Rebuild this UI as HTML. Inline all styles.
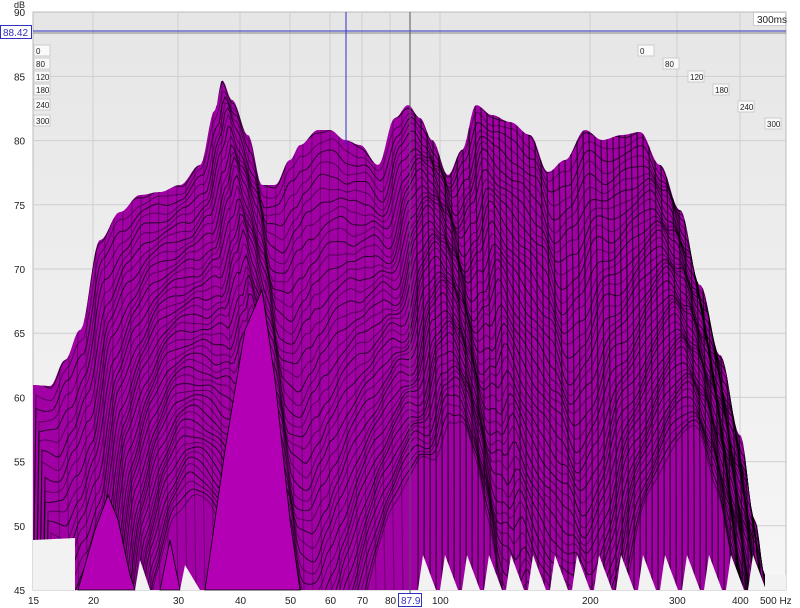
<!DOCTYPE html>
<html><head><style>
html,body{margin:0;background:#fff;width:800px;height:608px;overflow:hidden;font-family:"Liberation Sans",sans-serif}
svg{display:block}
</style></head><body>
<svg id="s" width="800" height="608" viewBox="0 0 800 608" xmlns="http://www.w3.org/2000/svg" font-family="Liberation Sans, sans-serif" font-size="10">
<defs>
<linearGradient id="bg" x1="0" y1="0" x2="0" y2="1"><stop offset="0" stop-color="#e6e6e6"/><stop offset="1" stop-color="#f6f6f6"/></linearGradient>
<clipPath id="env"><polygon id="envp" points=""/></clipPath>
</defs>
<rect x="33" y="12" width="753" height="578" fill="url(#bg)" stroke="#bbb"/>
<g id="grid" stroke="#cfcfcf" stroke-width="1"></g>
<polygon id="mass" fill="#a000a4" points=""/>
<g id="stripes" clip-path="url(#env)" fill="none" stroke="#000" stroke-opacity="0.7" stroke-width="1"></g>
<g id="front" fill="#b400b4" stroke="#000" stroke-width="0.8"></g>
<g id="gaps" fill="#f2f2f2"></g>
<g id="labels" fill="#222"></g>
<line x1="33" y1="31" x2="786" y2="31" stroke="#3030c0" stroke-width="1"/>
<line x1="33" y1="33" x2="786" y2="33" stroke="#888" stroke-width="1"/>
<line x1="346" y1="12" x2="346" y2="145" stroke="#3030c0"/>
<line x1="410" y1="12" x2="410" y2="593" stroke="#555"/>
<rect x="0.5" y="25.5" width="31" height="13" fill="#fff" stroke="#3030c0"/>
<text x="3" y="36" fill="#3030c0" font-size="10">88.42</text>
<rect x="398.5" y="593.5" width="23" height="13" fill="#fff" stroke="#3030c0"/>
<text x="401" y="604" fill="#3030c0" font-size="10">87.9</text>
<rect x="753.5" y="12.5" width="32" height="13" fill="#fff" stroke="#ccc"/>
<text x="757" y="23" font-size="10" fill="#222">300ms</text>
</svg>
<script>
var ns="http://www.w3.org/2000/svg";
function el(p,t,a,txt){var e=document.createElementNS(ns,t);for(var k in a)e.setAttribute(k,a[k]);if(txt!==undefined)e.textContent=txt;document.getElementById(p).appendChild(e);return e;}
var fx=[[15,33],[20,93],[30,178],[40,240],[50,290],[60,330],[70,362],[80,390],[100,440],[200,590],[300,677],[400,740],[500,768]];
fx.forEach(function(f){if(f[0]!==15&&f[0]!==500)el("grid","line",{x1:f[1],y1:12,x2:f[1],y2:590});
el("labels","text",{x:f[1]-(f[0]>=100?8:5),y:604,"font-size":10},f[0]==500?"500 Hz":(f[0]==100?"100":f[0]));});
for(var d=45;d<=90;d+=5){var y=590-(d-45)*64.2/5;if(d>45&&d<90)el("grid","line",{x1:33,y1:y,x2:786,y2:y});
el("labels","text",{x:14,y:y+4,"font-size":10},d);}
el("labels","text",{x:14,y:8,"font-size":9},"dB");
var tl=[["0",36,52],["80",36,65],["120",36,78],["180",36,91],["240",36,106],["300",36,122]];
tl.forEach(function(t){el("labels","rect",{x:t[1]-2,y:t[2]-7,width:16,height:11,fill:"#fafafa",stroke:"#ccc"});el("labels","text",{x:t[1],y:t[2]+2,"font-size":8},t[0]);});
var tr=[["0",640,52],["80",665,65],["120",690,78],["180",715,91],["240",740,108],["300",767,125]];
tr.forEach(function(t){el("labels","rect",{x:t[1]-2,y:t[2]-7,width:16,height:11,fill:"#fafafa",stroke:"#ccc"});el("labels","text",{x:t[1],y:t[2]+2,"font-size":8},t[0]);});
var E=[[33,385],[50,386],[65,360],[80,330],[100,240],[120,212],[140,195],[160,192],[180,185],[200,165],[215,110],[222,80],[232,100],[248,135],[262,185],[275,185],[290,160],[300,145],[318,130],[330,130],[345,140],[360,145],[378,165],[395,118],[408,105],[420,118],[432,140],[448,175],[462,150],[476,105],[492,115],[510,122],[530,135],[548,172],[565,160],[585,130],[602,140],[622,135],[640,132],[660,165],[680,210],[700,285],[720,355],[740,435],[755,520],[765,575]];
function env(x){for(var i=0;i<E.length-1;i++){if(x>=E[i][0]&&x<=E[i+1][0]){var t=(x-E[i][0])/(E[i+1][0]-E[i][0]);t=(1-Math.cos(t*Math.PI))/2;return E[i][1]+t*(E[i+1][1]-E[i][1]);}}return 590;}
var pts2=[];for(var x=33;x<=765;x+=2)pts2.push(x+","+env(x).toFixed(1));pts2.push("765,590","33,590","33,537");
document.getElementById("mass").setAttribute("points",pts2.join(" "));
document.getElementById("envp").setAttribute("points",pts2.join(" "));
for(var k=0;k<48;k++){var d="";for(var x=33;x<=770;x+=3){var off=k*9*(1+0.3*Math.sin(x/40));var y=env(x-k*1.2)+off+3*Math.sin(x/7+k*0.8);d+=(x==33?"M":"L")+x+","+y.toFixed(1);}el("stripes","path",{d:d,"stroke-opacity":(k%2?0.45:0.75)});}
for(var x=415;x<765;x+=6){var y0=env(x);el("stripes","path",{d:"M"+x+","+y0+" Q"+(x+4)+","+((y0+590)/2)+" "+(x+2+(x%3))+",590","stroke-width":1.2});}
for(var x=60;x<410;x+=9){var y0=env(x);el("stripes","path",{d:"M"+x+","+y0+" Q"+(x-3)+","+((y0+590)/2)+" "+(x+1)+",590","stroke-opacity":0.35});}
el("front","path",{d:"M78,590 L95,530 L108,495 L118,520 L130,575 L135,590 Z"});
el("front","path",{d:"M205,590 L225,450 L245,330 L262,290 L275,380 L290,520 L300,590 Z"});
el("front","path",{d:"M160,590 L170,540 L180,590 Z"});
el("gaps","path",{d:"M33,540 L75,538 L75,590 L33,590 Z"});
el("gaps","path",{d:"M135,590 L140,560 L150,590 Z"});
el("gaps","path",{d:"M180,590 L185,565 L200,590 Z"});
for(var x=418;x<760;x+=22){el("gaps","path",{d:"M"+x+",590 L"+(x+5)+",555 L"+(x+18)+",590 Z"});}
el("gaps","path",{d:"M765,575 L786,575 L786,590 L765,590 Z"});
</script>
</body></html>
